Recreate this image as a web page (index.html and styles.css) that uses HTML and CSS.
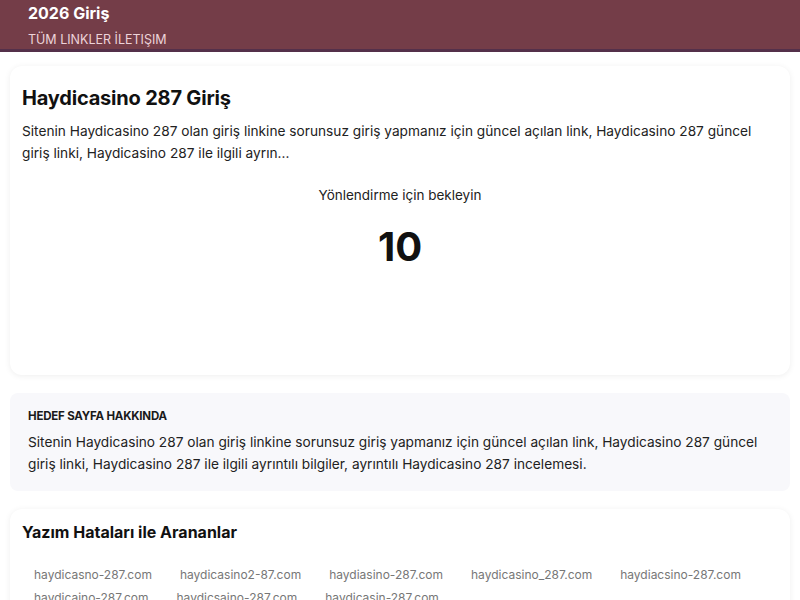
FILE: index.html
```html
<!DOCTYPE html>
<html lang="tr">
<head>
<meta charset="utf-8">
<title>Haydicasino 287 Giriş</title>
<link rel="stylesheet" href="styles.css">
</head>
<body>
<header class="site-header">
  <div class="brand">2026 Giriş</div>
  <nav class="nav"><a href="#">TÜM LINKLER</a> <a href="#">İLETIŞIM</a></nav>
</header>
<main class="page">
  <section class="card main-card">
    <h1 class="title">Haydicasino 287 Giriş</h1>
    <p class="desc">Sitenin Haydicasino 287 olan giriş linkine sorunsuz giriş yapmanız için güncel açılan link, Haydicasino 287 güncel giriş linki, Haydicasino 287 ile ilgili ayrın...</p>
    <div class="redirect">
      <div class="wait">Yönlendirme için bekleyin</div>
      <div class="count">10</div>
    </div>
  </section>
  <section class="about">
    <div class="about-label">HEDEF SAYFA HAKKINDA</div>
    <p class="about-text">Sitenin Haydicasino 287 olan giriş linkine sorunsuz giriş yapmanız için güncel açılan link, Haydicasino 287 güncel giriş linki, Haydicasino 287 ile ilgili ayrıntılı bilgiler, ayrıntılı Haydicasino 287 incelemesi.</p>
  </section>
  <section class="card typos">
    <h2 class="typos-title">Yazım Hataları ile Arananlar</h2>
    <ul class="typo-list">
      <li>haydicasno-287.com</li>
      <li>haydicasino2-87.com</li>
      <li>haydiasino-287.com</li>
      <li>haydicasino_287.com</li>
      <li>haydiacsino-287.com</li>
      <li>haydicaino-287.com</li>
      <li>haydicsaino-287.com</li>
      <li>haydicasin-287.com</li>
    </ul>
  </section>
</main>
</body>
</html>
```
FILE: styles.css
```css
* { box-sizing: border-box; }
html, body { margin: 0; padding: 0; background: #fff; }
body {
  font-family: "Inter", "Noto Sans", sans-serif;
  color: #111;
}
.site-header {
  background: #743d48;
  border-bottom: 3px solid #54304a;
  height: 52px;
  padding: 2px 28px 0;
}
.brand {
  color: #fff;
  font-weight: 700;
  font-size: 16px;
  line-height: 22px;
}
.nav {
  margin-top: 7px;
  font-size: 12.5px;
  line-height: 18px;
}
.nav a { color: #edd3d9; text-decoration: none; }
.page {
  padding: 14px 10px 0;
  display: flex;
  flex-direction: column;
  gap: 18px;
}
.card {
  background: #fff;
  border-radius: 12px;
  box-shadow: 0 1px 6px rgba(0,0,0,0.07);
  padding: 12px 12px;
}
.title {
  margin: 6px 0 0;
  font-size: 20px;
  line-height: 28px;
  font-weight: 700;
  letter-spacing: -0.2px;
}
.desc {
  margin: 8px 0 0;
  font-size: 13.7px;
  line-height: 22px;
  color: #222;
}
.redirect {
  text-align: center;
  height: 199px;
  padding-top: 20px;
}
.wait {
  font-size: 13.5px;
  line-height: 22px;
  color: #222;
}
.count {
  margin-top: 17px;
  font-size: 40px;
  font-weight: 700;
  line-height: 48px;
}
.about {
  background: #f8f8fb;
  border-radius: 8px;
  padding: 14px 18px 16px;
}
.about-label {
  font-size: 11.5px;
  font-weight: 700;
  line-height: 18px;
  color: #1a1a1a;
  letter-spacing: -0.2px;
}
.about-text {
  margin: 6px 0 0;
  font-size: 13.7px;
  line-height: 22px;
  color: #222;
}
.typos { padding: 12px 12px 12px; }
.typos-title {
  margin: 0;
  font-size: 16px;
  line-height: 22px;
  font-weight: 700;
}
.typo-list {
  list-style: none;
  margin: 22px 0 0;
  padding: 0;
  display: flex;
  flex-wrap: wrap;
  gap: 3px 4px;
}
.typo-list li {
  font-size: 12px;
  line-height: 20px;
  color: #777;
  padding: 0 12px;
}
```
